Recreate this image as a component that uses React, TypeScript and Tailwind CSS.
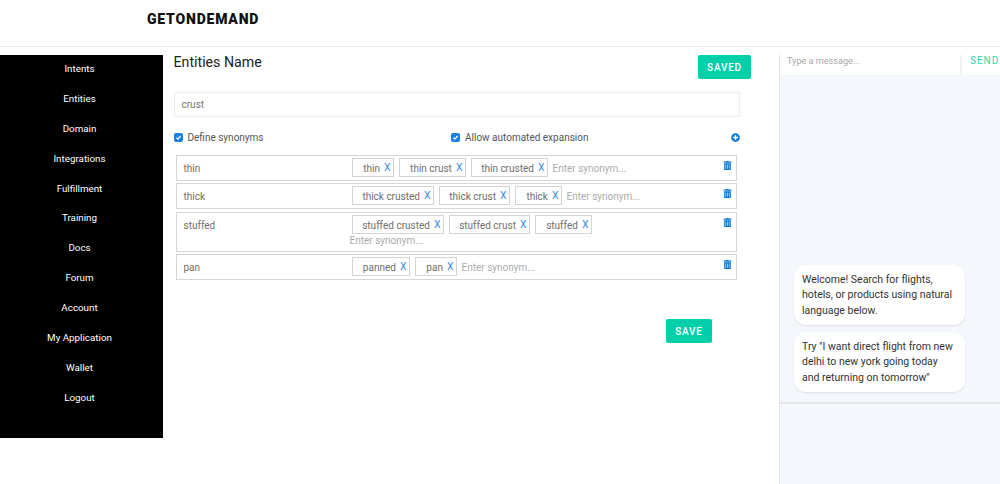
import { FaPlusCircle, FaTrashAlt } from "react-icons/fa";

const menu = ["Intents", "Entities", "Domain", "Integrations", "Fulfillment", "Training", "Docs", "Forum", "Account", "My Application", "Wallet", "Logout"];

const rows = [
    { name: "thin", chips: [["thin", 42], ["thin crust", 67], ["thin crusted", 77]] },
    { name: "thick", chips: [["thick crusted", 82], ["thick crust", 71], ["thick", 47]] },
    { name: "stuffed", chips: [["stuffed crusted", 92], ["stuffed crust", 81], ["stuffed", 57]] },
    { name: "pan", chips: [["panned", 58], ["pan", 42]] },
] as { name: string; chips: [string, number][] }[];

const Chip = ({ label, width }: { label: string; width: number }) => (
    <div style={{ width }} className="flex h-[19px] items-center justify-end gap-[4px] border border-[#d4d4d4] pr-[2px] pt-[1px] text-[#6f6f6f]">
        <span>{label}</span>
        <span className="text-[10.5px] text-[#3b8fe0]">X</span>
    </div>
);

const Check = () => (
    <span className="flex h-[9px] w-[9px] items-center justify-center rounded-[2px] bg-[#1b7fe6]">
        <svg viewBox="0 0 10 10" className="h-[7px] w-[7px]" fill="none" stroke="white" strokeWidth="1.8">
            <path d="M2 5.2 4.2 7.4 8 2.8" />
        </svg>
    </span>
);

export default function App() {
    return (
        <div className="flex h-[484px] w-[1000px] flex-col overflow-hidden bg-white font-['Roboto',sans-serif] text-[10px]">
            <header className="h-[47px] shrink-0 border-b border-[#eeeeee] pl-[147px] pt-[10px]">
                <div className="text-[14px] font-black leading-[18px] tracking-[0.8px] text-[#111111]">GETONDEMAND</div>
            </header>
            <div className="flex min-h-0 flex-1">
                <nav className="mt-[8px] flex h-[383px] w-[163px] shrink-0 flex-col items-center bg-black pr-[4px] pt-[7px] text-white">
                    {menu.map((m) => (
                        <div key={m} className="h-[29.9px] text-[9.8px] leading-[14px]">{m}</div>
                    ))}
                </nav>
                <main className="w-[616px] shrink-0 pl-[10.5px] pr-[39px] pt-[8px]">
                    <div className="flex items-start justify-between">
                        <h1 className="text-[14.2px] font-normal leading-[15px] text-[#222222]">Entities Name</h1>
                        <button className="-mr-[11px] h-[24px] w-[53px] rounded-[2px] bg-[#00cfa9] text-[10px] font-medium tracking-[0.8px] text-white">SAVED</button>
                    </div>
                    <div className="mt-[13px] flex h-[25px] items-center border border-[#ececec] pl-[7px] text-[#777777]">crust</div>
                    <div className="mt-[15px] flex h-[10px] items-center text-[#555555]">
                        <div className="flex w-[277.5px] items-center gap-[5px]"><Check /><span className="pt-[1px]">Define synonyms</span></div>
                        <div className="flex flex-1 items-center gap-[5px]"><Check /><span className="pt-[1px]">Allow automated expansion</span></div>
                        <FaPlusCircle className="text-[9px] text-[#0a78d8]" />
                    </div>
                    <div className="mt-[13px] ml-[2px] mr-[3px] flex flex-col gap-[2px]">
                        {rows.map((r) => (
                            <div key={r.name} className={r.name === "stuffed" ? "relative mt-[1px] flex border border-[#d6d6d6] pl-[7px] pt-[2px] pb-[3px] text-[#6f6f6f]" : "relative flex border border-[#d6d6d6] pl-[7px] pt-[2px] pb-[3px] text-[#6f6f6f]"}>
                                <div className="w-[168px] shrink-0 pt-[4px] leading-[13px]">{r.name}</div>
                                <div className="flex w-[360px] flex-wrap items-center gap-x-[5px]">
                                    {r.chips.map(([c, w]) => <Chip key={c} label={c} width={w} />)}
                                    <span className={r.name === "stuffed" ? "-ml-[2px] h-[14px] w-full leading-[14px] text-[#ababab]" : "pt-[1px] text-[#ababab]"}>Enter synonym...</span>
                                </div>
                                <FaTrashAlt className="absolute right-[4px] top-[5px] text-[9px] text-[#0a78d8]" />
                            </div>
                        ))}
                    </div>
                    <div className="mt-[39px] flex justify-end pr-[28px]">
                        <button className="h-[24px] w-[46px] rounded-[2px] bg-[#00cfa9] text-[10px] font-medium tracking-[0.8px] text-white">SAVE</button>
                    </div>
                </main>
                <aside className="flex flex-1 flex-col">
                    <div className="mt-[8px] flex h-[20px] shrink-0 border-l border-[#e2e2e2] bg-white">
                        <div className="flex-1 pl-[7px] text-[9.1px] leading-[12px] text-[#a8a8a8]">Type a message...</div>
                        <div className="w-[40px] border-l-2 border-[#f1f1f1] pl-[8px] text-[10px] leading-[12px] tracking-[1px] text-[#1fdcb5]">SEND</div>
                    </div>
                    <div className="flex flex-1 flex-col items-start justify-end gap-[7px] border-b-2 border-l border-b-[#e4e6ea] border-l-[#e2e2e2] bg-[#f4f7fc] pb-[10px] pl-[14px]">
                        <div className="h-[60px] w-[171px] rounded-[12px] bg-white px-[8px] py-[6.5px] text-[10.5px] leading-[15.5px] text-[#333333] shadow-[0_1px_2px_rgba(0,0,0,0.1)]">Welcome! Search for flights, hotels, or products using natural language below.</div>
                        <div className="h-[60px] w-[171px] rounded-[12px] bg-white px-[8px] py-[6.5px] text-[10.5px] leading-[15.5px] text-[#333333] shadow-[0_1px_2px_rgba(0,0,0,0.1)]">Try "I want direct flight from new delhi to new york going today and returning on tomorrow"</div>
                    </div>
                    <div className="h-[80px] shrink-0 border-l border-[#e2e2e2] bg-[#f4f7fc]"></div>
                </aside>
            </div>
        </div>
    );
}
